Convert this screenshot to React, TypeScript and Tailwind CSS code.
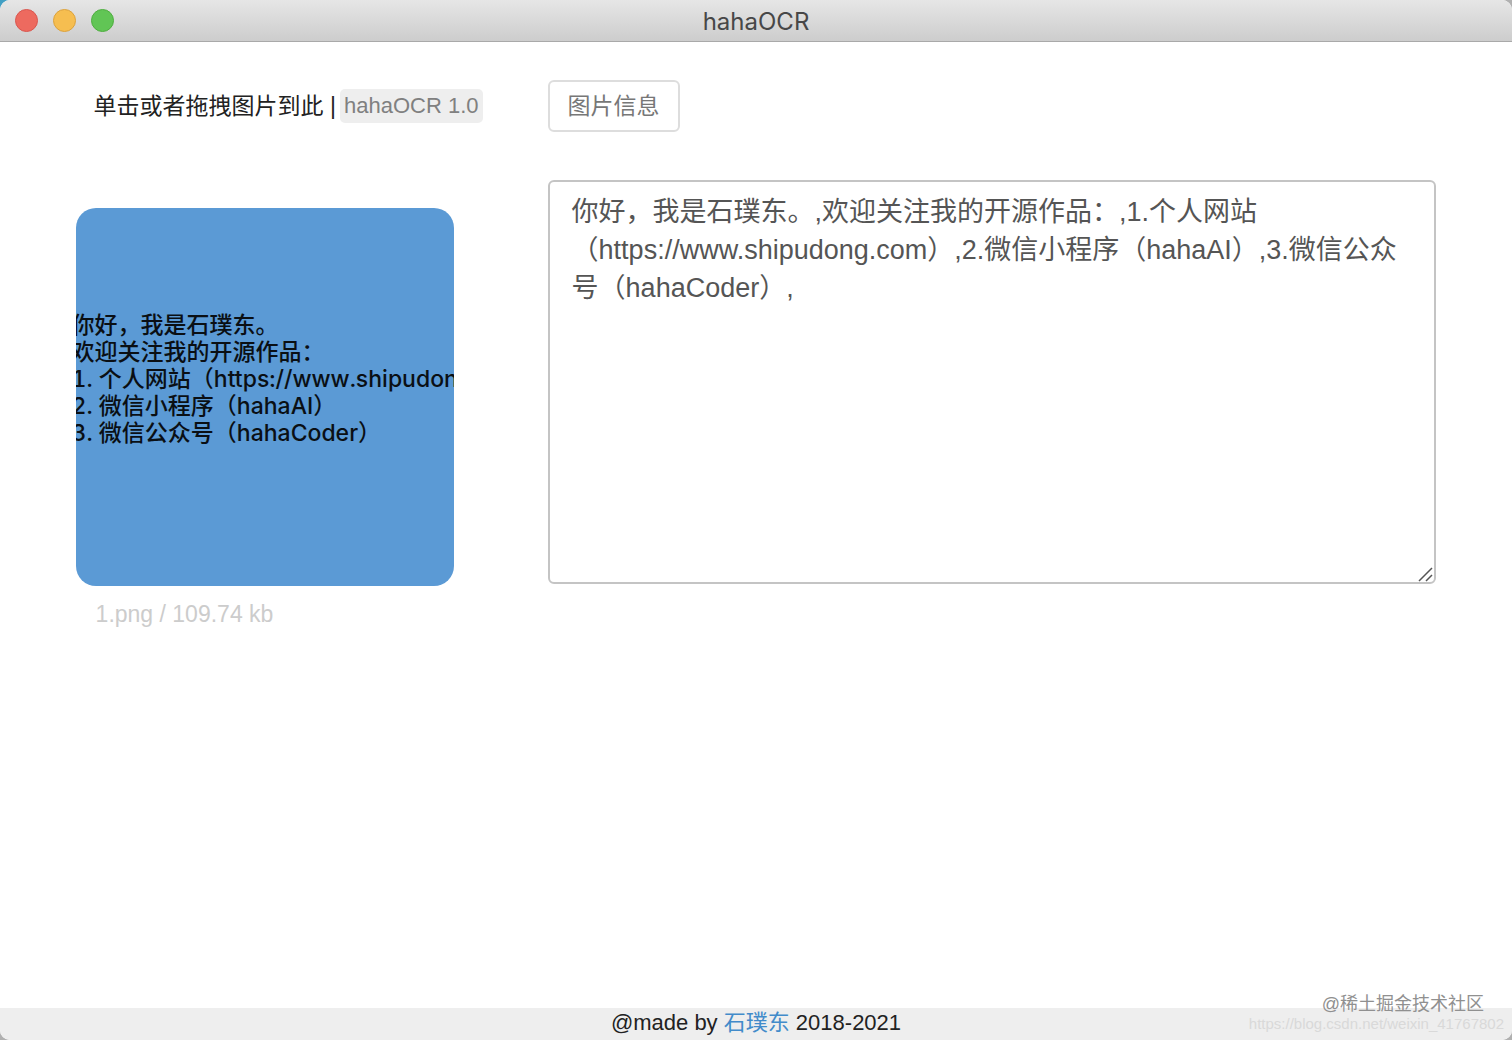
// src/App.tsx
import React, { useState } from 'react';

// Lines printed on the uploaded sample picture
const previewLines = [
  '你好，我是石璞东。',
  '欢迎关注我的开源作品：',
  '1. 个人网站（https://www.shipudong.com）',
  '2. 微信小程序（hahaAI）',
  '3. 微信公众号（hahaCoder）',
];

const initialResult =
  '你好，我是石璞东。,欢迎关注我的开源作品：,1.个人网站（https://www.shipudong.com）,2.微信小程序（hahaAI）,3.微信公众号（hahaCoder）,';

const TitleBar: React.FC = () => {
  return (
    <header className="relative flex h-[42px] shrink-0 items-center justify-center rounded-t-[10px] border-b border-[#a9a9a9] bg-linear-to-b from-[#e6e6e6] to-[#cdcdcd]">
      <div className="absolute left-[15px] flex gap-[15px]">
        <button type="button" aria-label="Close" className="size-[23px] rounded-full border border-[#d9564f] bg-[#ed6a5f]" />
        <button type="button" aria-label="Minimize" className="size-[23px] rounded-full border border-[#dca23c] bg-[#f6be50]" />
        <button type="button" aria-label="Zoom" className="size-[23px] rounded-full border border-[#4fae40] bg-[#61c555]" />
      </div>
      <h1 className="pt-0.5 font-[Inter,sans-serif] text-[24px] leading-8 text-[#474747]">hahaOCR</h1>
    </header>
  );
};

const App: React.FC = () => {
  const [result, setResult] = useState(initialResult);

  return (
    <div className="min-h-screen bg-linear-to-br from-[#3f9fc4] to-[#b0b0b0] to-10% font-['Liberation_Sans','Noto_Sans_CJK_SC',sans-serif]">
      <div className="flex min-h-screen flex-col rounded-[10px] bg-white">
        <TitleBar />

        <main className="flex grow items-start px-[5%] pt-[38px]">
          {/* Upload column */}
          <section className="w-[378px] shrink-0">
            <p className="flex h-[52px] items-center pl-[18px] text-[23px] leading-8 whitespace-nowrap text-[#222]">
              <span>单击或者拖拽图片到此 |</span>
              <code className="ml-1 rounded-[5px] bg-[#eee] px-1 font-['Liberation_Sans',sans-serif] text-[22px] leading-[34px] text-[#808080]">
                hahaOCR 1.0
              </code>
            </p>

            <button
              type="button"
              className="mt-[76px] flex aspect-square w-full flex-col justify-center overflow-hidden rounded-[20px] bg-[#5b9ad5] pb-9 text-left font-[Inter,'Noto_Sans_CJK_SC',sans-serif] text-[23px] leading-[27px] font-medium text-[#0a0f14] tabular-nums"
            >
              {previewLines.map((line) => (
                <span key={line} className="-ml-1 whitespace-nowrap">{line}</span>
              ))}
            </button>

            <p className="mt-3 pl-5 text-[23px] leading-8 text-[#ccc]">1.png / 109.74 kb</p>
          </section>

          {/* Result column */}
          <section className="ml-[94px] min-w-0 grow">
            <button type="button" className="h-[52px] rounded-md border-2 border-[#ddd] bg-white px-[18px] text-[23px] text-[#777]">
              图片信息
            </button>

            <div className="relative mt-12">
              <textarea
                aria-label="识别结果"
                value={result}
                onChange={(e) => setResult(e.target.value)}
                className="block h-[404px] w-full resize-none rounded-md border-2 border-[#c4c4c4] bg-white px-[22px] py-[11px] text-[27px] leading-[38px] text-[#555] outline-none"
              />
              <svg className="pointer-events-none absolute right-[3px] bottom-[2px]" width="15" height="15" viewBox="0 0 15 15" stroke="#555" strokeWidth="1.5">
                <path d="M1 14L14 1M8 14L14 8" />
              </svg>
            </div>
          </section>
        </main>

        <footer className="relative flex h-8 shrink-0 items-center justify-center rounded-b-[10px] bg-[#eee] text-[22px] leading-8 text-[#222]">
          <p className="pb-0.5">
            @made by <a href="#author" className="text-[#428bca]">石璞东</a> 2018-2021
          </p>
          <div className="pointer-events-none absolute right-2 bottom-2 flex flex-col items-end">
            <span className="mr-5 text-[18px] leading-6 text-[#909090]">@稀土掘金技术社区</span>
            <span className="text-[15px] leading-4 text-[#d9d9d9]">https://blog.csdn.net/weixin_41767802</span>
          </div>
        </footer>
      </div>
    </div>
  );
};

export default App;
